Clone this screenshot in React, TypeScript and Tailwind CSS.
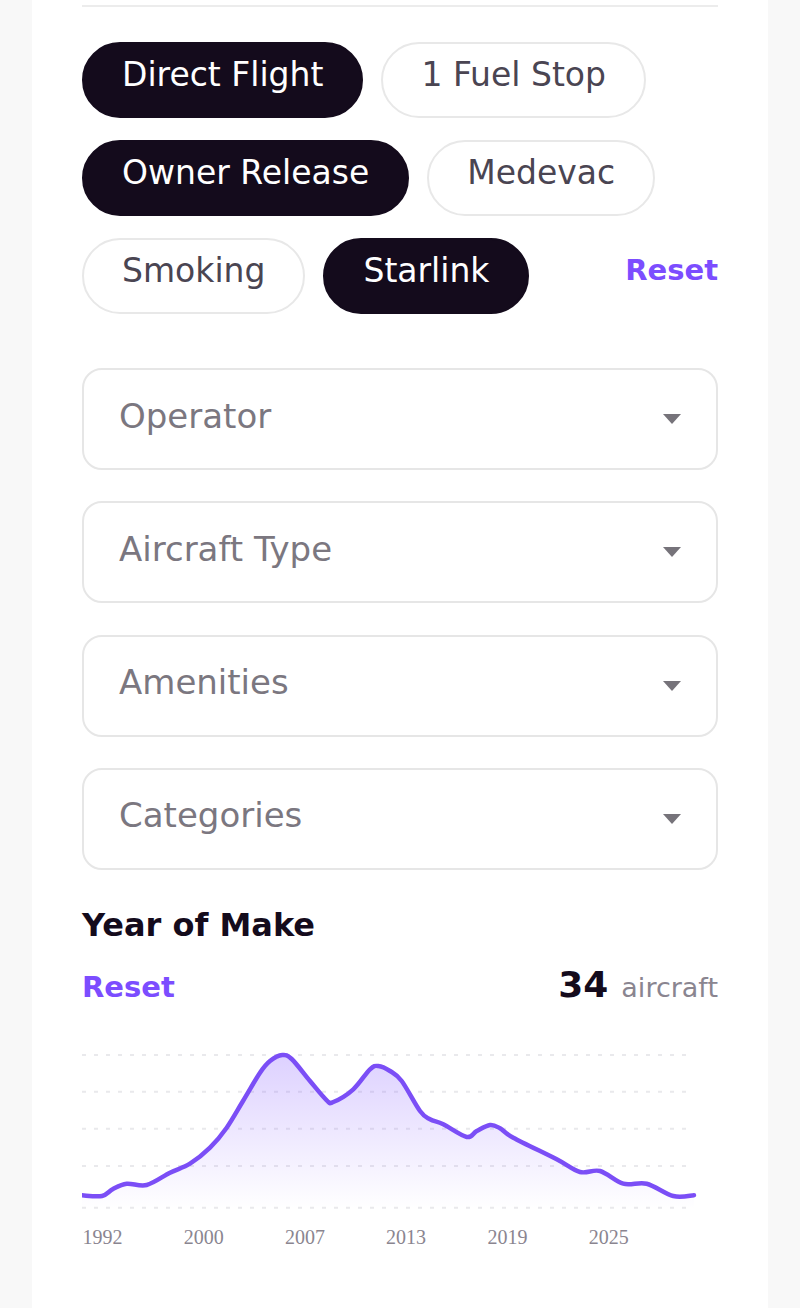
import React from "react";

const pills: { label: string; on: boolean }[] = [
  { label: "Direct Flight", on: true },
  { label: "1 Fuel Stop", on: false },
  { label: "Owner Release", on: true },
  { label: "Medevac", on: false },
  { label: "Smoking", on: false },
  { label: "Starlink", on: true },
];

const selects = ["Operator", "Aircraft Type", "Amenities", "Categories"];

const pts: [number, number][] = [
  [0, 154.3], [20, 155], [31, 148], [44.7, 142.7], [64.7, 144], [88, 131.7], [108, 122.7],
  [128, 106.7], [144.7, 86.7], [161, 60], [178, 31.7], [188, 20], [200.3, 14], [209.7, 18],
  [228, 40], [244.7, 59.3], [251.3, 61], [271.3, 48.3], [288, 28.3], [296.3, 25], [308, 30],
  [319.7, 40], [338, 70], [348, 78.3], [361.3, 83.3], [384.7, 96], [394.7, 90], [408, 84],
  [418, 87.3], [431.3, 96.7], [474.7, 118.3], [498, 131], [518, 130], [541.3, 142.7],
  [564.7, 142.7], [591.3, 155], [612, 154.3],
];

function smoothPath(p: [number, number][]) {
  let d = `M ${p[0][0]} ${p[0][1]}`;
  for (let i = 0; i < p.length - 1; i++) {
    const p0 = p[i - 1] || p[i];
    const p1 = p[i];
    const p2 = p[i + 1];
    const p3 = p[i + 2] || p2;
    const c1x = p1[0] + (p2[0] - p0[0]) / 6;
    const c1y = p1[1] + (p2[1] - p0[1]) / 6;
    const c2x = p2[0] - (p3[0] - p1[0]) / 6;
    const c2y = p2[1] - (p3[1] - p1[1]) / 6;
    d += ` C ${c1x.toFixed(1)} ${c1y.toFixed(1)}, ${c2x.toFixed(1)} ${c2y.toFixed(1)}, ${p2[0]} ${p2[1]}`;
  }
  return d;
}

function Chart() {
  const line = smoothPath(pts);
  const area = `${line} L 612 168 L 0 168 Z`;
  const grid = [14, 50.7, 87.7, 125, 166.7];
  const labels: [string, number][] = [
    ["1992", 20.5],
    ["2000", 121.8],
    ["2007", 223],
    ["2013", 324],
    ["2019", 425.5],
    ["2025", 526.8],
  ];
  return (
    <svg width="636" height="230" viewBox="0 0 636 230" className="block">
      <defs>
        <linearGradient id="fillGrad" x1="0" y1="0" x2="0" y2="1">
          <stop offset="0%" stopColor="#7c4dff" stopOpacity="0.26" />
          <stop offset="100%" stopColor="#7c4dff" stopOpacity="0" />
        </linearGradient>
      </defs>
      {grid.map((y) => (
        <line key={y} x1="0" x2="610" y1={y} y2={y} stroke="#e9e9ec" strokeWidth="2" strokeDasharray="4 8" />
      ))}
      <path d={area} fill="url(#fillGrad)" />
      <path d={line} fill="none" stroke="#7b4ef6" strokeWidth="4.5" strokeLinecap="round" strokeLinejoin="round" />
      {labels.map(([t, x]) => (
        <text
          key={t}
          x={x}
          y="203"
          textAnchor="middle"
          fontFamily="'Liberation Serif', serif"
          fontSize="20"
          fill="#8a8590"
        >
          {t}
        </text>
      ))}
    </svg>
  );
}

export default function App() {
  return (
    <div
      className="min-h-[1308px] bg-[#f8f8f8] flex justify-center"
      style={{ fontFamily: "'DejaVu Sans', sans-serif" }}
    >
      <div className="w-[736px] h-[1308px] bg-white px-[50px] pt-[5px] overflow-hidden">
        <div className="h-[2px] bg-[#ececec]" />
        <div className="mt-[35px] flex flex-wrap gap-x-[18px] gap-y-[22px]">
          {pills.map((p) => (
            <div
              key={p.label}
              className={
                p.on
                  ? "h-[76px] px-[38px] pb-[10px] rounded-full border-2 border-[#140b1c] bg-[#140b1c] text-white text-[33px] flex items-center"
                  : "h-[76px] px-[38px] pb-[10px] rounded-full border-2 border-[#e8e8e8] bg-white text-[#4a4552] text-[33px] flex items-center"
              }
            >
              {p.label}
            </div>
          ))}
          <div className="ml-auto h-[76px] pb-[10px] flex items-center text-[29px] font-bold text-[#7c4dff]">
            Reset
          </div>
        </div>
        <div className="mt-[54px] flex flex-col gap-[31.3px]">
          {selects.map((s) => (
            <div
              key={s}
              className="h-[102px] rounded-[20px] border-2 border-[#e6e6e6] pl-[35px] pr-[35px] pb-[6px] flex items-center justify-between"
            >
              <span className="text-[34px] text-[#7b7780]">{s}</span>
              <svg width="18" height="10" viewBox="0 0 18 10" className="mt-[6px]">
                <path d="M0 0 H18 L9 10 Z" fill="#76737a" />
              </svg>
            </div>
          ))}
        </div>
        <div className="mt-[35px] text-[32px] font-bold text-[#140b1c] leading-[40px]">Year of Make</div>
        <div className="mt-[13px] flex items-baseline justify-between">
          <span className="text-[29px] font-bold text-[#7c4dff]">Reset</span>
          <span className="flex items-baseline">
            <span className="text-[36px] font-bold text-[#140b1c]">34</span>
            <span className="ml-[13px] text-[27px] text-[#8a8590]">aircraft</span>
          </span>
        </div>
        <div className="mt-[29px]">
          <Chart />
        </div>
      </div>
    </div>
  );
}
